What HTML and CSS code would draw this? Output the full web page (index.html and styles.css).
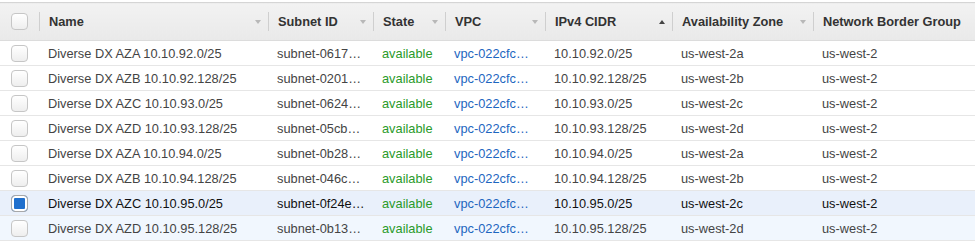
FILE: index.html
```html
<!DOCTYPE html>
<html>
<head>
<meta charset="utf-8">
<link rel="stylesheet" href="styles.css">
</head>
<body>
<div class="wrap">
<table class="grid">
  <colgroup>
    <col class="c-check"><col class="c-name"><col class="c-subnet"><col class="c-state"><col class="c-vpc"><col class="c-cidr"><col class="c-az"><col class="c-nbg">
  </colgroup>
  <thead>
    <tr>
      <th class="check"><span class="box"></span></th>
      <th><div class="hcell"><span class="sep"></span><span class="label">Name</span><span class="arrow down"></span></div></th>
      <th><div class="hcell"><span class="sep"></span><span class="label">Subnet ID</span><span class="arrow down"></span></div></th>
      <th><div class="hcell"><span class="sep"></span><span class="label">State</span><span class="arrow down"></span></div></th>
      <th><div class="hcell"><span class="sep"></span><span class="label">VPC</span><span class="arrow down"></span></div></th>
      <th><div class="hcell"><span class="sep"></span><span class="label">IPv4 CIDR</span><span class="arrow up"></span></div></th>
      <th><div class="hcell"><span class="sep"></span><span class="label">Availability Zone</span><span class="arrow down"></span></div></th>
      <th><div class="hcell"><span class="sep"></span><span class="label">Network Border Group</span></div></th>
    </tr>
  </thead>
  <tbody>
    <tr><td class="check"><span class="box"></span></td><td>Diverse DX AZA 10.10.92.0/25</td><td>subnet-0617…</td><td class="ok">available</td><td class="link">vpc-022cfc…</td><td>10.10.92.0/25</td><td>us-west-2a</td><td>us-west-2</td></tr>
    <tr><td class="check"><span class="box"></span></td><td>Diverse DX AZB 10.10.92.128/25</td><td>subnet-0201…</td><td class="ok">available</td><td class="link">vpc-022cfc…</td><td>10.10.92.128/25</td><td>us-west-2b</td><td>us-west-2</td></tr>
    <tr><td class="check"><span class="box"></span></td><td>Diverse DX AZC 10.10.93.0/25</td><td>subnet-0624…</td><td class="ok">available</td><td class="link">vpc-022cfc…</td><td>10.10.93.0/25</td><td>us-west-2c</td><td>us-west-2</td></tr>
    <tr><td class="check"><span class="box"></span></td><td>Diverse DX AZD 10.10.93.128/25</td><td>subnet-05cb…</td><td class="ok">available</td><td class="link">vpc-022cfc…</td><td>10.10.93.128/25</td><td>us-west-2d</td><td>us-west-2</td></tr>
    <tr><td class="check"><span class="box"></span></td><td>Diverse DX AZA 10.10.94.0/25</td><td>subnet-0b28…</td><td class="ok">available</td><td class="link">vpc-022cfc…</td><td>10.10.94.0/25</td><td>us-west-2a</td><td>us-west-2</td></tr>
    <tr><td class="check"><span class="box"></span></td><td>Diverse DX AZB 10.10.94.128/25</td><td>subnet-046c…</td><td class="ok">available</td><td class="link">vpc-022cfc…</td><td>10.10.94.128/25</td><td>us-west-2b</td><td>us-west-2</td></tr>
    <tr class="selected"><td class="check"><span class="box on"></span></td><td>Diverse DX AZC 10.10.95.0/25</td><td>subnet-0f24e…</td><td class="ok">available</td><td class="link">vpc-022cfc…</td><td>10.10.95.0/25</td><td>us-west-2c</td><td>us-west-2</td></tr>
    <tr class="hover"><td class="check"><span class="box"></span></td><td>Diverse DX AZD 10.10.95.128/25</td><td>subnet-0b13…</td><td class="ok">available</td><td class="link">vpc-022cfc…</td><td>10.10.95.128/25</td><td>us-west-2d</td><td>us-west-2</td></tr>
  </tbody>
</table>
</div>
</body>
</html>
```

FILE: styles.css
```css
html, body {
  margin: 0;
  padding: 0;
  background: #fff;
}
body {
  font-family: "Liberation Sans", Arial, sans-serif;
  font-size: 12.8px;
  color: #444;
}
.wrap {
  padding-top: 2px;
  width: 975px;
}
.grid {
  width: 975px;
  table-layout: fixed;
  border-collapse: collapse;
}
.c-check { width: 39px; }
.c-name { width: 229px; }
.c-subnet { width: 105px; }
.c-state { width: 72px; }
.c-vpc { width: 100px; }
.c-cidr { width: 127px; }
.c-az { width: 141px; }
.c-nbg { width: 162px; }

thead th {
  height: 37px;
  padding: 0;
  background: linear-gradient(#f2f2f2, #e9e9e9);
  border-top: 1px solid #d5d5d5;
  border-bottom: 1px solid #dcdcdc;
  text-align: left;
  font-weight: bold;
  color: #333;
  font-size: 12.8px;
}
.hcell {
  display: flex;
  align-items: center;
  height: 37px;
}
.sep {
  width: 1px;
  height: 19px;
  background: #cfcfcf;
  flex: none;
}
.label {
  flex: 1;
  padding-left: 9px;
  white-space: nowrap;
  overflow: hidden;
}
.arrow {
  width: 0;
  height: 0;
  border-left: 3.5px solid transparent;
  border-right: 3.5px solid transparent;
  margin-right: 7px;
  flex: none;
}
.arrow.down {
  border-top: 4px solid #b8b8b8;
}
.arrow.up {
  border-bottom: 4px solid #444;
}

tbody td {
  height: 24px;
  padding: 0 0 0 9px;
  border-bottom: 1px solid #e6e6e6;
  white-space: nowrap;
  overflow: hidden;
}
tbody td.check, thead th.check {
  padding: 0 0 0 11px;
}
.box {
  display: block;
  width: 15px;
  height: 15px;
  border: 1px solid #c6c6c6;
  border-radius: 4px;
  background: linear-gradient(#ffffff, #eeeeee);
}
.box.on {
  background: #1f6fcd;
  box-shadow: inset 0 0 0 2px #fff;
  border-color: #a8a8a8;
}
.ok { color: #2a9a2a; }
.link { color: #1d66bf; }
tr.selected td {
  background: #e9f0fb;
  color: #111;
}
tr.selected td.ok { color: #2a9a2a; }
tr.selected td.link { color: #1d66bf; }
tr.hover td {
  background: #f1f7fe;
}
```
